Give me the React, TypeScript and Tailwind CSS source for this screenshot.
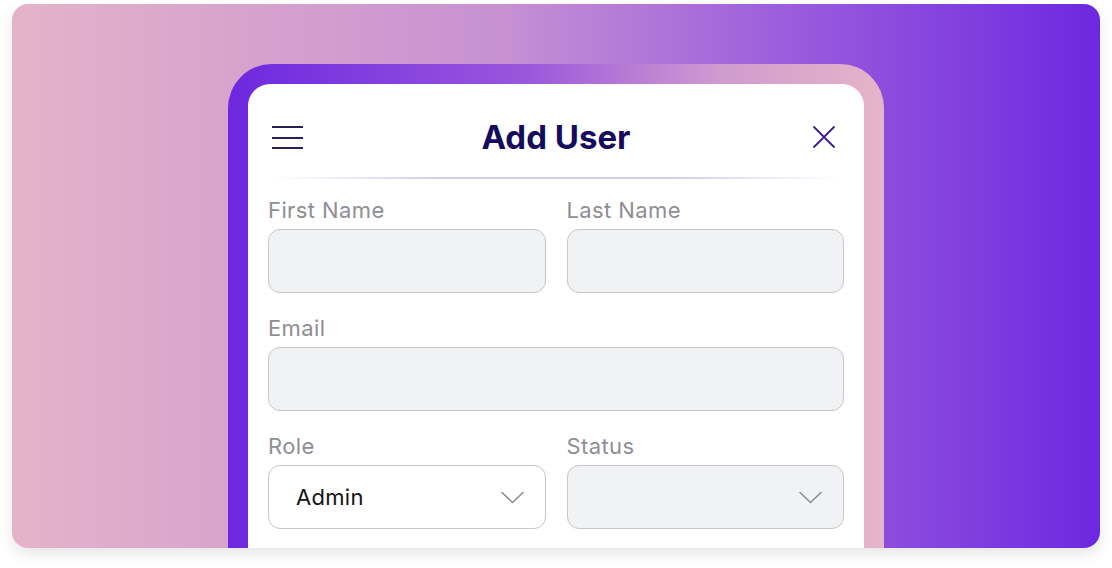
import React from "react";

const font = { fontFamily: "Inter, 'Noto Sans', sans-serif" };

function Label({ children }: { children: React.ReactNode }) {
  return (
    <div className="text-[22px] leading-[28px] text-[#8e8e94] mb-[5px] tracking-[0.4px]">{children}</div>
  );
}

function Field({ label }: { label: string }) {
  return (
    <div>
      <Label>{label}</Label>
      <div className="h-[64px] rounded-[12px] border-[1.5px] border-[#c6c6cb] bg-[#f1f2f4]" />
    </div>
  );
}

function Chevron() {
  return (
    <svg width="23" height="13" viewBox="0 0 23 13" fill="none">
      <path d="M1 1.5L11.5 11.5L22 1.5" stroke="#8a8a8e" strokeWidth="1.5" strokeLinecap="round" strokeLinejoin="round" />
    </svg>
  );
}

function SelectField({ label, value, white }: { label: string; value?: string; white?: boolean }) {
  return (
    <div>
      <Label>{label}</Label>
      <div
        className={`h-[64px] rounded-[12px] border-[1.5px] border-[#c6c6cb] flex items-center justify-between pl-[27px] pr-[21px] ${
          white ? "bg-white" : "bg-[#f1f2f4]"
        }`}
      >
        <span className="text-[22px] leading-[28px] text-[#141414] tracking-[0.3px]">{value ?? ""}</span>
        <Chevron />
      </div>
    </div>
  );
}

export default function App() {
  return (
    <div className="w-[1112px] h-[568px] bg-white pt-[4px] px-[12px]" style={font}>
      <div className="h-[544px] rounded-[16px] overflow-hidden bg-[linear-gradient(to_right,#e5b3c9,#c791d2_45%,#9e5fdc_70%,#6d28e0)] shadow-[0_6px_14px_rgba(0,0,0,0.10)] flex justify-center pt-[60px]">
        <div className="w-[656px] h-[600px] rounded-t-[44px] bg-[linear-gradient(to_right,#6d28e0,#9a56dc_45%,#cf9bd0_75%,#e6b5c8)] pt-[20px] px-[20px]">
          <div className="h-full bg-white rounded-t-[22px]">
            <div className="grid grid-cols-[1fr_auto_1fr] items-center px-[24px] pt-[33px] pb-[20px]">
              <div className="flex items-center">
                <svg width="32" height="24" viewBox="0 0 32 24" fill="none">
                  <path d="M0 2H31M0 13H31M0 23H31" stroke="#27224f" strokeWidth="1.8" />
                </svg>
              </div>
              <div className="text-[33px] leading-[40px] font-bold text-[#160b5c]">Add User</div>
              <div className="flex items-center justify-end pr-[5px]">
                <svg width="22" height="22" viewBox="0 0 22 22" fill="none">
                  <path d="M1 1L21 21M21 1L1 21" stroke="#3e1b8c" strokeWidth="1.8" strokeLinecap="round" />
                </svg>
              </div>
            </div>
            <div className="mx-[24px] h-[2px] bg-[linear-gradient(to_right,rgba(200,190,240,0),#d3cbf2_30%,#d3cbf2_70%,rgba(200,190,240,0))]" />
            <div className="px-[20px] pt-[17px] flex flex-col gap-[21px]">
              <div className="grid grid-cols-2 gap-[21px]">
                <Field label="First Name" />
                <Field label="Last Name" />
              </div>
              <Field label="Email" />
              <div className="grid grid-cols-2 gap-[21px]">
                <SelectField label="Role" value="Admin" white />
                <SelectField label="Status" />
              </div>
            </div>
          </div>
        </div>
      </div>
    </div>
  );
}
